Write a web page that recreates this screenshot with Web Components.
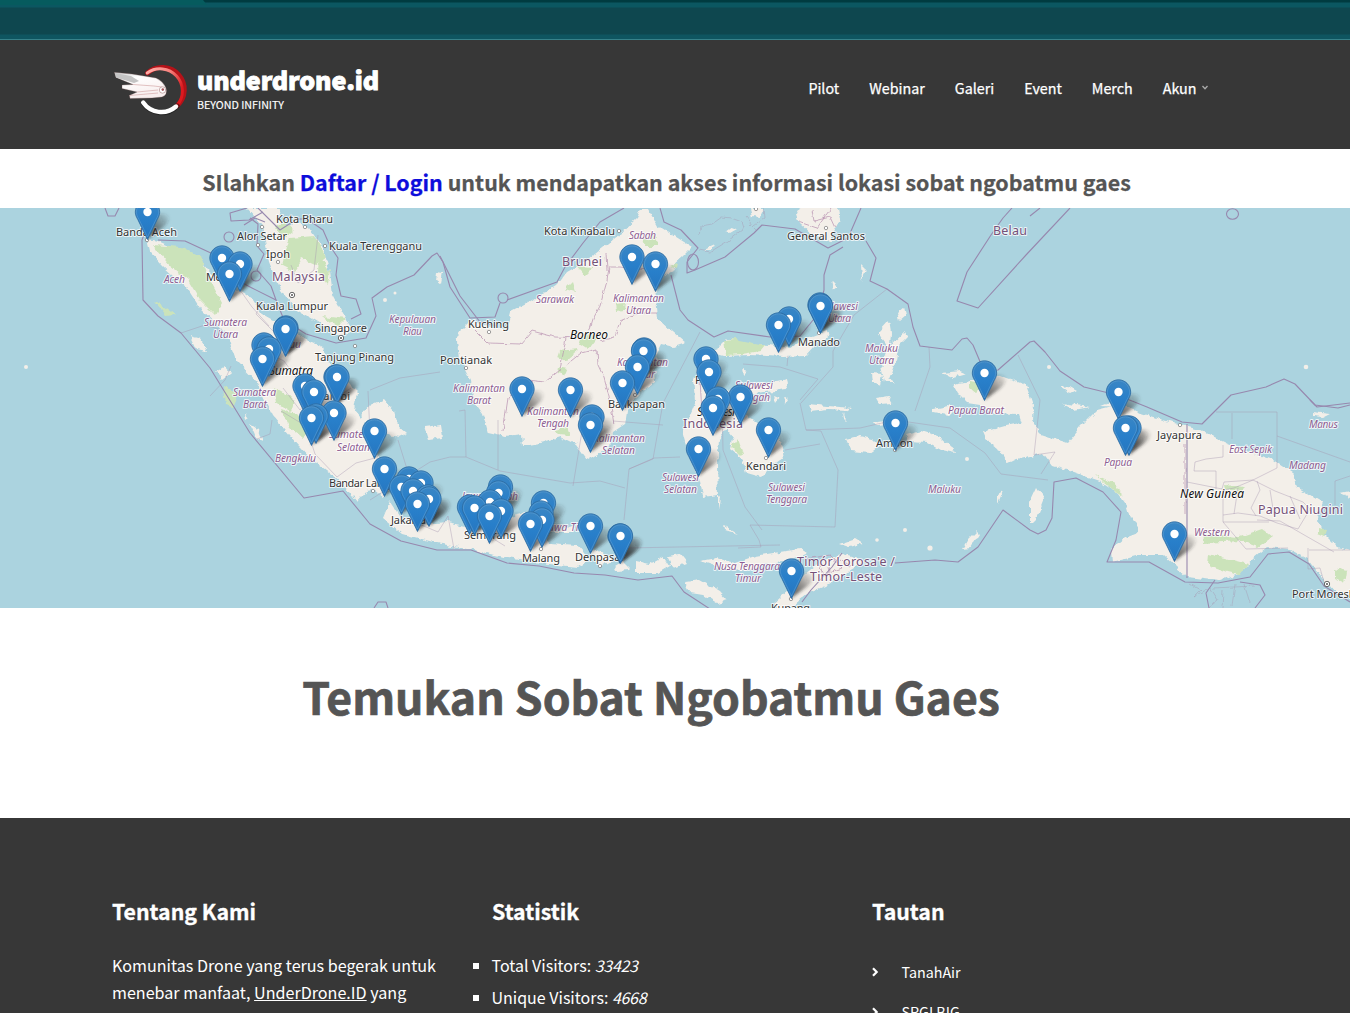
<!DOCTYPE html>
<html lang="id">
<head>
<meta charset="utf-8">
<title>underdrone.id</title>
<style>
html,body{margin:0;height:1013px;overflow:hidden;background:#fff}
body{font-family:"Noto Sans CJK JP","Noto Sans",sans-serif;color:#555}
</style>
</head>
<body>
<drone-app></drone-app>
<script>
const define=(name,html)=>customElements.define(name,class extends HTMLElement{
  constructor(){super();this.attachShadow({mode:'open'}).innerHTML=html}
});

define('window-strip',`<style>:host{display:block;height:40px;box-sizing:border-box;border-bottom:1px solid #37828a;background:linear-gradient(#003b40 0 2px,#0b5761 3px 7px,#0e474f 8px 34px,#0e5560 35px)}
i{display:block;width:207px;height:5px;background:#065b5e;clip-path:polygon(0 0,203px 0,207px 5px,0 5px)}</style><i></i>`);

define('brand-logo',`<style>:host{display:flex;align-items:flex-start}
svg{display:block;width:76px;height:56px;margin-top:23px}
.t{margin:21px 0 0 9px;white-space:nowrap;color:#fff}
b{display:block;font-size:25px;font-weight:900;line-height:36px;letter-spacing:-.13px;-webkit-text-stroke:.9px #fff}
span{display:block;font-size:10.7px;line-height:14px;padding-top:1px;-webkit-text-stroke:.15px #fff}</style>
<svg viewBox="112 63 76 56"><defs><linearGradient id="r" x1="0" x2="1" y2=".5"><stop stop-color="#ffb0aa"/><stop offset=".55" stop-color="#f8807c"/><stop offset="1" stop-color="#dc1a1f"/></linearGradient>
<linearGradient id="w" y2="1" x2=".4"><stop stop-color="#ccc"/><stop offset=".3" stop-color="#fff"/><stop offset="1" stop-color="#f8eeee"/></linearGradient></defs>
<path d="M147.5 73A22 22 0 0 1 177 106" fill="none" stroke="#b51218" stroke-width="4.8" stroke-linecap="round"/>
<path d="M147.2 73A22.2 22.2 0 0 1 177 105.5" fill="none" stroke="url(#r)" stroke-width="3" stroke-linecap="round"/>
<path d="M143.6 103.5A22 22 0 0 0 177 106" fill="none" stroke="#111" stroke-opacity=".5" stroke-width="5.4" stroke-linecap="round"/>
<path d="M143.2 102.5A22.2 22.2 0 0 0 176 106.5" fill="none" stroke="#fff" stroke-width="4.4" stroke-linecap="round"/>
<g stroke="#6d4c4c" stroke-width=".3" stroke-linejoin="round"><path d="M114.3 72.3L132 74L156 78Q163 81 166 88Q168 95 162 97L152 98L130 98.5L129.5 95.5L137 92L122 88.5L122 85L133 84.5L116 77.5Z" fill="url(#w)"/>
<path d="M133 84.5L154 86L162 87M137 92L158 90M129.5 95.5L158 93" fill="none" stroke="#d9b3b3" stroke-width=".8"/><path d="M115 73L131 76L139 81L134 83L116 77.5Z" fill="#c4c4c4" stroke="none"/></g>
<circle cx="162.5" cy="90" r="3.2" fill="#fff" stroke="#b28e8e" stroke-width=".7"/><circle cx="162.8" cy="89.6" r="1.3" fill="#a6585d"/></svg>
<div class="t"><b>underdrone.id</b><span>BEYOND INFINITY</span></div>`);

define('nav-link',`<style>:host{display:flex;align-items:center;font-size:14.3px;font-weight:400;-webkit-text-stroke:.25px #fff;line-height:22px;color:#fff;white-space:nowrap}
svg{display:none;width:8px;height:6px;margin-left:4.5px}:host([menu]) svg{display:block}</style><slot></slot>
<svg viewBox="0 0 8 6"><path d="M1.5 1L4 3.8L6.5 1" fill="none" stroke="#aaa" stroke-width="1.3"/></svg>`);

define('site-header',`<style>:host{display:flex;height:109px;background:#373737;padding:0 141px 0 112px;justify-content:space-between}
nav{display:flex;gap:30px;padding-top:37px;height:22px}</style>
<brand-logo></brand-logo><nav><nav-link>Pilot</nav-link><nav-link>Webinar</nav-link><nav-link>Galeri</nav-link><nav-link>Event</nav-link><nav-link>Merch</nav-link><nav-link menu>Akun</nav-link></nav>`);

define('login-notice',`<style>:host{display:block;height:59px;padding-right:17px;text-align:center;font-size:21.45px;font-weight:700;line-height:65px;color:#555;white-space:nowrap;-webkit-text-stroke:.25px currentColor}
a{color:#0d0ddb;text-decoration:none;-webkit-text-stroke:.25px #0d0ddb}</style>SIlahkan <a>Daftar / Login</a> untuk mendapatkan akses informasi lokasi sobat ngobatmu gaes`);

const labels=[
['Banda Aceh',116,177,236],['Kota Bharu',276,333,223],['Alor Setar',237,287,240],['Ipoh',266,290,258],['Kuala Terengganu',329,422,250],['Medan',206,240,281],['Kuala Lumpur',256,328,310],['Singapore',315,367,332],['Tanjung Pinang',315,394,361],['Jambi',320,350,400],['Bandar Lampung',329,412,487],['Jakarta',391,426,524],['Semarang',464,516,539],['Malang',522,560,562],['Denpasar',575,625,561],['Kuching',468,509,328],['Pontianak',440,492,364],['Kota Kinabalu',544,615,235],['Balikpapan',608,665,408],['Palu',695,715,384],['Manado',798,840,346],['Kendari',746,786,470],['Ambon',876,913,447],['General Santos',787,865,240],['Jayapura',1157,1202,439],['Kupang',771,810,612],['Port Moresby',1292,1361,598],
['Malaysia',272,325,281,'c'],['Brunei',562,602,266,'c'],['Indonesia',683,743,428,'c'],['Belau',993,1027,235,'c'],["Timór Lorosa'e /",797,895,566,'c'],['Timor-Leste',810,882,581,'c'],['Papua Niugini',1258,1343,514,'c'],
['Aceh',164,185,283,'p'],['Sumatera',204,247,326,'p'],['Utara',213,238,338,'p'],['Kepulauan',389,436,323,'p'],['Riau',403,422,335,'p'],['Riau',281,301,348,'p'],['Sumatera',233,276,396,'p'],['Barat',243,267,408,'p'],['Bengkulu',275,316,462,'p'],['Sumatera',329,373,438,'p'],['Selatan',337,370,451,'p'],['Sabah',629,656,239,'p'],['Sarawak',536,574,303,'p'],['Kalimantan',613,664,302,'p'],['Utara',626,651,314,'p'],['Kalimantan',617,668,366,'p'],['Timur',630,655,378,'p'],['Kalimantan',453,505,392,'p'],['Barat',467,491,404,'p'],['Kalimantan',527,579,415,'p'],['Tengah',537,569,427,'p'],['Kalimantan',593,645,442,'p'],['Selatan',602,635,454,'p'],['Jawa Tengah',462,518,500,'p'],['Jawa Timur',545,598,531,'p'],['Sulawesi',735,773,389,'p'],['Tengah',738,770,401,'p'],['Sulawesi',662,699,481,'p'],['Selatan',664,697,493,'p'],['Sulawesi',768,805,491,'p'],['Tenggara',766,807,503,'p'],['Sulawesi',820,858,310,'p'],['Utara',828,851,322,'p'],['Maluku',865,898,352,'p'],['Utara',869,894,364,'p'],['Maluku',928,961,493,'p'],['Papua Barat',948,1004,414,'p'],['Nusa Tenggara',714,780,570,'p'],['Timur',735,761,582,'p'],['Papua',1104,1132,466,'p'],['East Sepik',1229,1272,453,'p'],['Manus',1309,1338,428,'p'],['Madang',1289,1326,469,'p'],['Western',1194,1230,536,'p'],
['Sumatra',269,313,375,'i'],['Borneo',570,608,339,'i'],['Sulawesi',697,735,416,'i'],['New Guinea',1180,1244,498,'i']];
const pins=[[147.5,212],[222,258],[240,264],[229.5,274],[286,328],[285.5,329],[264,345],[269,349],[262.5,359],[305,386],[314,392],[336,377],[337,377],[334,413],[316,416],[311.5,418],[374.5,431],[384.5,469],[632,257],[655.5,264],[644,350],[643.5,351],[637.5,367],[622.5,383],[522,389],[570.5,390],[592,417],[590.5,425],[706,359],[709,372],[718,399],[713,408],[740.5,397],[698.5,449],[768.5,430],[820,305],[820.5,306],[789,319],[778.5,325],[984.5,373],[895.5,423],[1118.5,392],[1129,428],[1125.5,428],[1174.5,534],[791.5,571],[620,536],[620.5,536],[590.5,526],[530.5,524],[542,520],[543.5,503],[541,513],[500.5,487],[498.5,493],[490,502],[501,511],[489.5,516],[474.5,508],[469.5,507],[409,479],[421,483],[401.5,487],[413,491],[428,497],[429,499],[417.5,504]].sort((a,b)=>a[1]-b[1]);
const cities=[[262,227],[305,227],[325,246],[278,262],[258,245],[355,346],[489,332],[466,368],[619,231],[826,228],[635,395],[766,458],[895,450],[1180,425],[373,491],[541,549],[600,566],[147,240],[819,333],[791,599],[756,209]];
const poly=(s,c)=>`<path class="${c}" d="M${s}Z"/>`, line=(s,c='b')=>`<path class="${c}" d="M${s}"/>`;

/* islands */
const land=[
'147 239L157 241L173 248L197 255L207 268L223 285L240 291L253 300L263 315L283 326L303 338L323 347L329 362L343 378L357 392L354 410L366 424L377 457L386 480L383 497L374 490L366 491L357 502L345 487L330 473L310 458L290 436L273 416L257 383L236 361L227 334L200 308L187 288L163 266L150 252',
'247 208L262 225L269 262L281 290L294 308L322 325L340 337L353 331L343 314L333 295L330 272L323 248L309 228L296 221L287 228L278 218L280 208',
'470 320L490 328L507 328L511 312L530 302L557 285L567 272L585 262L603 248L620 234L637 218L641 209L648 209L657 225L673 235L692 247L682 257L673 265L675 270L661 277L655 286L658 318L673 332L686 343L674 347L661 344L653 360L655 382L638 394L627 411L625 424L613 432L610 447L587 460L576 445L560 437L540 443L523 446L522 434L506 436L488 432L483 414L473 400L470 380L459 358L457 341L461 329',
'390 501L400 516L424 524L447 522L480 529L507 517L526 513L538 525L550 543L577 545L590 560L577 567L540 563L507 558L473 550L437 543L403 534L383 518',
'590 552L600 550L613 561L600 567','614 566L622 561L631 570L616 571','636 561L650 564L664 556L670 566L658 573L636 573','667 556L680 554L687 563L673 568',
'717 348L727 338L750 344L770 345L790 348L807 338L827 331L830 335L815 345L805 356L783 357L750 355L724 356L714 353L705 369L712 384L722 394L738 386L765 383L786 381L788 388L776 391L755 393L743 404L747 415L763 429L779 437L784 457L772 466L761 477L747 473L743 460L730 449L733 436L727 428L719 439L717 467L718 495L703 497L700 481L688 452L682 430L690 415L696 400L694 380L701 354',
'774 383L786 380L787 389L776 390','774 396L779 398L776 402','784 395L789 399L786 404','768 396L772 400L767 401','743 369L748 371L744 375','350 430L370 405L384 399L394 411L398 425L407 433L399 437L383 434L376 420L359 424','425 427L440 425L442 438L429 440','437 272L443 273L441 284L436 280','190 335L201 338L206 352L197 350','216 372L225 366L231 373L223 379','245 413L249 418L246 420','250 424L259 430L263 442L256 438',
'685 582L700 580L719 591L727 600L717 603L702 594L690 592','700 561L716 558L735 563L755 556L786 551L801 549L807 553L790 561L762 565L746 572L718 567','773 604L790 589L805 574L820 562L842 554L866 561L849 571L826 586L807 594L785 611',
'845 439L859 436L873 439L880 446L870 453L850 451','905 435L921 431L941 437L952 447L955 453L941 450L927 442L909 441','878 332L889 320L891 333L890 346L905 332L908 337L898 347L896 360L889 379L896 383L885 383L881 365L888 347L882 339','897 313L904 307L906 315L899 321','872 373L883 374L881 385L873 382','876 398L888 396L893 404L880 405','808 404L828 406L852 408L847 411L828 410L810 412','843 412L847 422L844 419','943 373L960 371L967 374L953 378','933 409L948 406L960 408L948 415L933 412',
'953 385L969 382L980 375L998 375L1026 385L1033 405L1032 421L1042 435L1067 443L1080 427L1097 410L1120 404L1140 413L1173 423L1200 430L1227 443L1273 460L1293 473L1296 487L1323 503L1317 520L1323 533L1337 547L1351 550L1351 597L1333 591L1323 578L1307 559L1288 549L1267 547L1253 559L1240 574L1220 581L1187 577L1163 555L1140 555L1112 562L1111 549L1125 537L1138 532L1138 526L1130 518L1127 507L1117 493L1099 481L1073 472L1053 466L1043 453L1017 459L1007 464L998 448L986 439L983 432L1005 426L1021 423L1018 414L990 413L980 405L967 403L958 394',
'1030 502L1037 487L1044 498L1036 518L1030 524','962 549L968 539L977 530L979 535L971 548','998 494L1003 491L998 503','840 544L855 539L863 544L849 547','861 264L865 268L862 280','832 281L838 287L834 290','796 211L802 207L838 207L840 220L830 241L815 237L800 223','1313 412L1330 414L1324 417L1313 416','1340 493L1350 491L1350 497','718 494L720 497L718 511','724 526L738 534L725 530','553 532L577 525L573 532','1060 387L1068 386L1077 391L1071 394','1061 403L1090 407L1074 410','1101 406L1117 400L1123 407','750 208L764 208L760 217L752 216','726 232L733 227L737 229L730 233','704 250L715 245L712 250','872 422L885 420L891 423L875 426'];
const parks=['153 245L182 247L201 257L210 280L222 303L215 315L200 300L188 280L170 266','290 238L314 236L326 257L315 265L302 259L294 271L282 265','275 227L284 222L294 231L285 238','319 255L330 271L328 284L318 272','322 316L345 319L337 327','223 387L238 393L232 407L225 405','274 388L295 400L291 412L276 403','280 409L298 415L310 433L302 438L289 427','154 302L162 305L175 315L166 316','724 340L735 339L765 345L760 351L742 354L726 355','579 344L583 333L598 337L588 350','560 351L579 349L566 360L558 357','558 366L567 368L564 375L557 373','643 240L655 235L657 246L645 246','616 304L625 303L624 310L617 311','565 289L572 282L575 292','576 266L593 267L584 276','553 430L567 428L570 435L558 434','970 382L981 384L977 394L970 388','1203 534L1239 537L1262 529L1272 537L1258 547L1241 541L1204 543','1209 554L1248 564L1240 575L1227 572L1208 565','1318 528L1327 530L1325 536L1318 533','1334 568L1347 571L1345 584L1334 579','1225 485L1245 487L1241 491L1226 489','1095 475L1117 485L1124 497L1111 489','731 447L738 438L744 455L740 456','670 266L677 263L676 268','770 432L777 434L776 440'];
const borders=['140 208L147 227L142 240L143 300L158 316L181 333L210 368L250 433L304 498L343 491L370 524L401 541L437 550L471 550L507 563L539 566L574 573L605 575L638 580L672 576L684 592L710 609','158 240L185 241L213 254L229 276L252 288L276 300L284 320L306 334L336 343L366 338L376 316L372 298L387 287L414 275L432 256L437 253L443 262L450 287L470 318L495 317L500 303','258 208L280 230L297 219L307 219L323 230L330 246L338 258L336 275L341 296L356 299L361 314L351 319','247 208L230 213L231 221L249 220L263 212','440 256L460 296L480 322L497 326','507 300L557 282L565 267L583 243L600 222L624 208','660 208L664 222L681 230L698 248L687 262L687 273L695 270L725 257L754 233L762 225L795 229L828 248L848 238L861 208','671 275L680 310L688 320L714 337L728 331L770 337L800 336L818 314L824 290L824 275L830 255L843 247','866 241L876 258L870 281L887 289L908 304L913 327L920 346L952 350L962 339L967 338L973 345L984 371L998 370L1030 342L1034 341L1045 352L1060 371L1084 387L1117 395L1147 407L1182 422L1202 424L1231 395L1266 387L1284 379L1295 384L1315 405L1338 408L1350 405','1070 208L1026 255L978 308L957 301L967 272L991 235L1003 218L1012 208M1040 208L1030 216','1310 400L1317 407L1350 403','895 563L935 560L958 562L978 547L1003 510L1030 530L1038 534L1046 530L1052 518L1054 482L1076 478L1103 492L1121 512L1116 540L1107 562L1149 562L1185 582L1218 583L1250 577L1268 554L1289 552L1309 564L1324 586L1350 602','842 553L832 567L811 590L802 602','1215 580L1206 593L1209 608','1240 582L1260 585L1265 595L1255 608','1187 424L1187 578','374 608L378 602L386 602L388 608'];
const thin=['181 333L205 325L222 330','210 396L225 380L231 366','257 439L270 434L272 420','370 390L400 378L440 372','368 391L370 434','398 440L407 469','370 500L430 462L450 457L466 457L500 471L570 483L600 481L625 488','466 457L465 410L459 411','498 470L498 420','573 486L582 431','624 520L629 469L653 459L663 403L700 332','629 469L654 458L680 457','663 425L613 421','627 529L627 548L780 545','800 403L806 430L821 431L838 470L835 527L750 525L759 540L761 547L738 548','743 364L780 367L818 379L800 400','887 289L854 315L833 351L833 367L801 403','929 347L930 367L915 411','806 430L860 428L895 420L950 428L985 453L1001 474L1048 480','1018 355L1040 400L1034 455L1055 452L1041 474','788 356L787 366','785 450L820 444','722 400L723 450L745 507L762 530','400 516L438 532L448 516L454 549','488 522L484 533L505 546','300 383L284 361L255 347','283 388L300 410L309 399L328 409','309 399L336 398L351 388','281 411L306 426L315 454L337 477L356 463L375 458','240 290L252 307L269 326','263 300L256 314L278 336','291 265L298 283L314 270L318 235','1216 412L1277 412L1277 436L1350 462','1187 482L1222 489L1224 482L1253 480L1277 468L1277 436','1194 471L1195 462L1206 459L1223 457L1223 445M1194 471L1216 471L1216 489','1223 489L1223 522L1269 522','1232 413L1232 439','1223 522L1246 549L1288 548M1308 548L1308 569L1320 568L1324 582','1309 550L1350 550','1224 490L1234 488L1253 480L1275 491L1303 502L1310 509L1298 529L1277 523L1260 516L1238 513L1223 515','1257 481L1260 490L1251 508L1256 516M1270 490L1274 515M1290 496L1300 519M1238 488L1234 514','1257 520L1280 521L1306 536L1334 552','1335 505L1335 481L1350 476'];
const province=['474 329L488 343L521 344L532 331L555 337L579 338L589 332L593 319L600 306L607 281L609 267L620 267L649 270L661 275','566 338L560 370L545 382L528 380L508 398L503 431','566 365L581 353L597 349L598 365L604 378L609 396L614 424','600 341L615 337L620 321L638 313L657 313','794 561L830 555L842 568L823 575L819 563M828 567L831 580M840 560L850 566','1185 443L1185 515','606 253L607 270','700 380L702 412M712 390L722 400L747 401','812 210L814 221L830 217L835 228M799 222L817 228L831 208'];

define('drone-map',`<style>:host{display:block;height:400px;background:#abd3df}svg{display:block}
.l{fill:#f3efe9}.g{fill:#cbe3ba}.b{fill:none;stroke:#9788ae;stroke-width:1.1;stroke-linejoin:round}.n{fill:none;stroke:#a795b0;stroke-opacity:.6;stroke-width:.7}.v{fill:none;stroke:#b58bad;stroke-opacity:.75;stroke-width:.9}
text{font:11px "Noto Sans",sans-serif;fill:#333;stroke:#fff;stroke-opacity:.75;stroke-width:2px;paint-order:stroke;stroke-linejoin:round}
.c{font-size:12.5px;fill:#755178}.p{font-size:10.3px;font-style:italic;fill:#8d5d91}.i{font-size:11.9px;font-style:italic;fill:#111}</style>
<svg width="1350" height="400" viewBox="0 208 1350 400"><defs>
<filter id="coast" x="0" y="0" width="1" height="1" filterUnits="objectBoundingBox"><feTurbulence type="fractalNoise" baseFrequency=".13" numOctaves="3" seed="7"/><feDisplacementMap in="SourceGraphic" scale="6" xChannelSelector="R" yChannelSelector="G"/></filter>
<filter id="fine"><feTurbulence type="fractalNoise" baseFrequency=".15" numOctaves="2" seed="3"/><feDisplacementMap in="SourceGraphic" scale="4" xChannelSelector="R" yChannelSelector="G"/></filter>
<filter id="soft" x="-50%" y="-50%" width="200%" height="200%"><feGaussianBlur stdDeviation="1.7"/></filter>
<linearGradient id="blue" y2="1" x2="0"><stop stop-color="#3a86c4"/><stop offset=".5" stop-color="#287fca"/><stop offset="1" stop-color="#2675be"/></linearGradient>
<linearGradient id="fade" x1="0" y1="1" x2="1" y2="0"><stop stop-color="#222" stop-opacity=".75"/><stop offset=".5" stop-color="#222" stop-opacity=".45"/><stop offset="1" stop-color="#333" stop-opacity="0"/></linearGradient>
<g id="pin"><path d="M0-12.2C-6.7-12.2-12.2-6.8-12.2.1C-12.2 3-11 5.2-9.6 7.7L0 27.5L9.6 7.7C11 5.2 12.2 3 12.2.1C12.2-6.8 6.7-12.2 0-12.2Z" fill="url(#blue)" stroke="#2d6b9f" stroke-width=".8"/><path d="M0-11.1C-6-11.1-11.1-6-11.1.1C-11.1 2.7-10 4.8-8.6 7.2L0 25L8.6 7.2C10 4.8 11.1 2.7 11.1.1C11.1-6 6-11.1 0-11.1Z" fill="none" stroke="#5e9fd2" stroke-opacity=".55" stroke-width="1"/><circle r="4.2" fill="#fff"/></g>
<path id="shade" d="M0 27L5 9C7 3 13 0 19 2C24 5 21 11 15 16Z" fill="url(#fade)" filter="url(#soft)"/></defs>
<g filter="url(#coast)"><path d="M0 208H1350V608H0Z" fill="#abd3df"/>${land.map(s=>poly(s,'l')).join('')}${parks.map(s=>poly(s,'g')).join('')}</g>
<g fill="#f3efe9"><circle cx="26" cy="367" r="2"/><circle cx="1306" cy="367" r="2.3"/><circle cx="905" cy="530" r="2"/><circle cx="930" cy="548" r="2.6"/><circle cx="967" cy="459" r="2"/><circle cx="1049" cy="367" r="2"/><circle cx="877" cy="540" r="1.8"/><circle cx="385" cy="300" r="2"/><circle cx="395" cy="293" r="1.5"/></g>
${thin.map(s=>line(s,'n')).join('')}<g filter="url(#fine)">${province.map(s=>line(s,'v')).join('')}</g>${borders.map(s=>line(s)).join('')}
<g class="b"><ellipse cx="1232.5" cy="214" rx="6" ry="5.3"/><circle cx="229" cy="237" r="5"/><circle cx="503" cy="298" r="5"/><circle cx="256" cy="276" r="5"/><ellipse cx="693" cy="262" rx="5.5" ry="8"/><path d="M105 208L108 216L115 216L119 208M250 218L258 224L257 246L264 254L257 270L271 286L276 300M244 225L255 218L265 222"/></g>
<g filter="url(#fine)" class="n"><path d="M699 235L701 226L712 224L722 217L731 218L742 222L744 228L728 241L710 252L700 250M750 224L756 230M746 216L754 226L765 218L764 208M1190 584L1200 590L1193 597L1210 587L1218 600L1208 608M1213 588L1255 586M1223 590L1222 608M1235 584L1232 606M1244 584L1250 603"/></g>
${cities.map(([x,y])=>`<circle cx="${x}" cy="${y}" r="1.7" fill="#fff" stroke="#777" stroke-width=".7"/>`).join('')}
${[[292,295],[341,338],[1327,584]].map(([x,y])=>`<circle cx="${x}" cy="${y}" r="2.7" fill="#fff" stroke="#444" stroke-width=".8"/><circle cx="${x}" cy="${y}" r="1" fill="#555"/>`).join('')}
${labels.map(([t,a,b,y,c=''])=>`<text class="${c}" x="${a}" y="${y}" textLength="${b-a}">${t}</text>`).join('')}
${pins.map(([x,y])=>`<use href="#shade" x="${x}" y="${y}"/>`).join('')}
${pins.map(([x,y])=>`<use href="#pin" x="${x}" y="${y}"/>`).join('')}</svg>`);

define('page-title',`<style>:host{display:block;height:210px;box-sizing:border-box;padding:53px 48px 0 0;text-align:center}h1{margin:0;font-size:44.55px;font-weight:700;line-height:70px;color:#555;white-space:nowrap;-webkit-text-stroke:.7px #555}</style><h1><slot></slot></h1>`);

define('footer-column',`<style>:host{display:block;color:#fff;font-size:16.12px;line-height:27px}h2{margin:0 0 23px;font-size:21.3px;font-weight:700;line-height:36px;-webkit-text-stroke:.3px #fff}</style><h2><slot name="heading"></slot></h2><slot></slot>`);

define('stat-row',`<style>:host{display:flex;align-items:center;height:32px;line-height:25px;font-size:16px;margin-left:-19px;white-space:pre}i{width:6px;height:6px;background:#fff;margin-right:12.5px}span{padding-bottom:2px}</style><i></i><span><slot></slot></span>`);
define('link-row',`<style>:host{display:flex;align-items:center;height:40px;font-size:14.3px}svg{width:8px;height:10px;margin:0 22.5px 0 -1px}span{padding-bottom:2px}</style><svg viewBox="0 0 8 10"><path d="M2 1.2L5.7 5L2 8.8" fill="none" stroke="#fff" stroke-width="2.2"/></svg><span><slot></slot></span>`);

define('site-footer',`<style>:host{display:grid;grid-template-columns:repeat(3,380px);height:195px;overflow:hidden;box-sizing:border-box;background:#373737;padding:75px 0 0 112px}
p{margin:4px 0 0;white-space:nowrap}.s{margin-top:-2px}.k{margin-top:3px}em{font-style:italic;letter-spacing:-.3px}</style>
<footer-column><span slot="heading">Tentang Kami</span><p>Komunitas Drone yang terus begerak untuk<br>menebar manfaat, <u>UnderDrone.ID</u> yang</p></footer-column>
<footer-column><span slot="heading">Statistik</span><div class="s"><stat-row>Total Visitors: <em>33423</em></stat-row><stat-row>Unique Visitors: <em>4668</em></stat-row></div></footer-column>
<footer-column><span slot="heading">Tautan</span><div class="k"><link-row>TanahAir</link-row><link-row>SRGI BIG</link-row></div></footer-column>`);

define('drone-app',`<style>:host{display:flex;flex-direction:column;width:1350px;height:1013px;overflow:hidden}</style>
<window-strip></window-strip><site-header></site-header><login-notice></login-notice><drone-map></drone-map><page-title>Temukan Sobat Ngobatmu Gaes</page-title><site-footer></site-footer>`);
</script>
</body>
</html>
